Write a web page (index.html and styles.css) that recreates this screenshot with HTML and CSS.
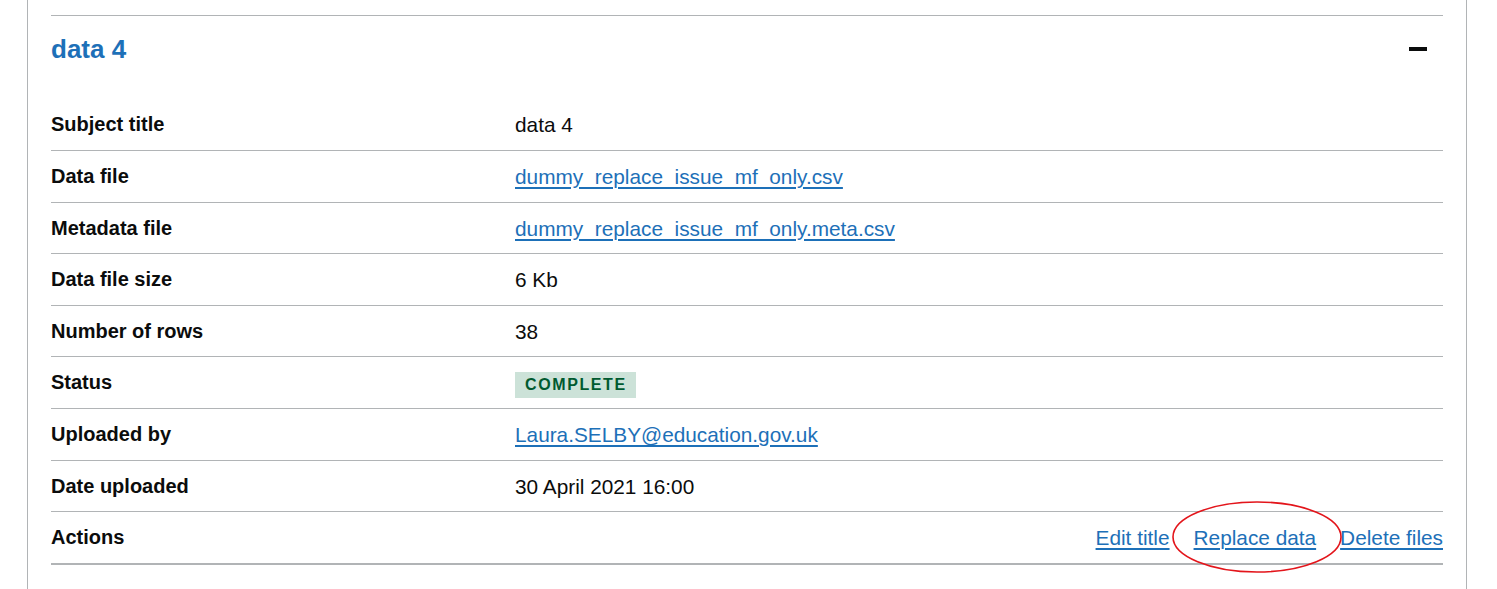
FILE: index.html
```html
<!DOCTYPE html>
<html lang="en">
<head>
<meta charset="utf-8">
<title>data 4</title>
<link rel="stylesheet" href="styles.css">
</head>
<body>
<div class="panel">
  <section class="accordion">
    <div class="acc-header">
      <h2 class="acc-title">data 4</h2>
      <span class="acc-icon" aria-hidden="true"></span>
    </div>
    <dl class="summary">
      <div class="row">
        <dt class="key">Subject title</dt>
        <dd class="value">data 4</dd>
      </div>
      <div class="row">
        <dt class="key">Data file</dt>
        <dd class="value"><a href="#">dummy_replace_issue_mf_only.csv</a></dd>
      </div>
      <div class="row">
        <dt class="key">Metadata file</dt>
        <dd class="value"><a href="#">dummy_replace_issue_mf_only.meta.csv</a></dd>
      </div>
      <div class="row">
        <dt class="key">Data file size</dt>
        <dd class="value">6 Kb</dd>
      </div>
      <div class="row">
        <dt class="key">Number of rows</dt>
        <dd class="value">38</dd>
      </div>
      <div class="row">
        <dt class="key">Status</dt>
        <dd class="value"><strong class="tag">Complete</strong></dd>
      </div>
      <div class="row">
        <dt class="key">Uploaded by</dt>
        <dd class="value"><a href="#">Laura.SELBY@education.gov.uk</a></dd>
      </div>
      <div class="row">
        <dt class="key">Date uploaded</dt>
        <dd class="value">30 April 2021 16:00</dd>
      </div>
      <div class="row row-last">
        <dt class="key">Actions</dt>
        <dd class="actions">
          <a href="#">Edit title</a>
          <span class="highlight">
            <a href="#">Replace data</a>
            <svg class="ring" viewBox="0 0 172 74" aria-hidden="true"><ellipse cx="86" cy="37" rx="84" ry="35" fill="none" stroke="#e3151b" stroke-width="1.6"/></svg>
          </span>
          <a href="#">Delete files</a>
        </dd>
      </div>
    </dl>
  </section>
</div>
</body>
</html>
```

FILE: styles.css
```css
* { box-sizing: border-box; }
html, body { margin: 0; padding: 0; background: #fff; }
body {
  font-family: "Liberation Sans", Arial, sans-serif;
  color: #0b0c0c;
  overflow: hidden;
  height: 589px;
}
.panel {
  margin-left: 27px;
  width: 1440px;
  height: 589px;
  border-left: 1px solid #b1b4b6;
  border-right: 1px solid #b1b4b6;
  padding: 15px 23px 0 23px;
}
.accordion {
  border-top: 1px solid #b1b4b6;
}
.acc-header {
  display: flex;
  align-items: flex-start;
  justify-content: space-between;
  height: 83.4px;
  padding-top: 18px;
}
.acc-title {
  margin: 0;
  font-size: 26px;
  line-height: 30px;
  font-weight: 700;
  color: #1d70b8;
}
.acc-icon {
  display: block;
  width: 18px;
  height: 4px;
  background: #0b0c0c;
  margin-top: 13px;
  margin-right: 16px;
}
.summary {
  margin: 0;
}
.row {
  display: grid;
  grid-template-columns: 464px 1fr;
  border-bottom: 1px solid #b1b4b6;
  font-size: 20.8px;
  line-height: 25px;
}
.row-last {
  border-bottom-width: 2px;
}
.key {
  font-weight: 700;
  font-size: 20px;
  padding: 13px 0 12.6px;
  margin: 0;
}
.value {
  margin: 0;
  padding: 13px 0 12.6px;
}
.value a, .actions a {
  color: #1d70b8;
  text-decoration: underline;
  text-decoration-thickness: 2px;
  text-underline-offset: 3px;
}
.tag {
  display: inline-block;
  background: #cce2d8;
  color: #005a30;
  font-weight: 700;
  font-size: 16px;
  line-height: 18px;
  letter-spacing: 1.6px;
  text-transform: uppercase;
  padding: 4px 9px 4px 10px;
  margin: -3px 0;
  vertical-align: middle;
}
.actions {
  margin: 0;
  padding: 13px 0 12.6px;
  display: flex;
  justify-content: flex-end;
  gap: 24px;
}
.highlight {
  position: relative;
  display: inline-block;
}
.ring {
  position: absolute;
  left: -23px;
  top: -25px;
  width: 172px;
  height: 74px;
  pointer-events: none;
}
```
